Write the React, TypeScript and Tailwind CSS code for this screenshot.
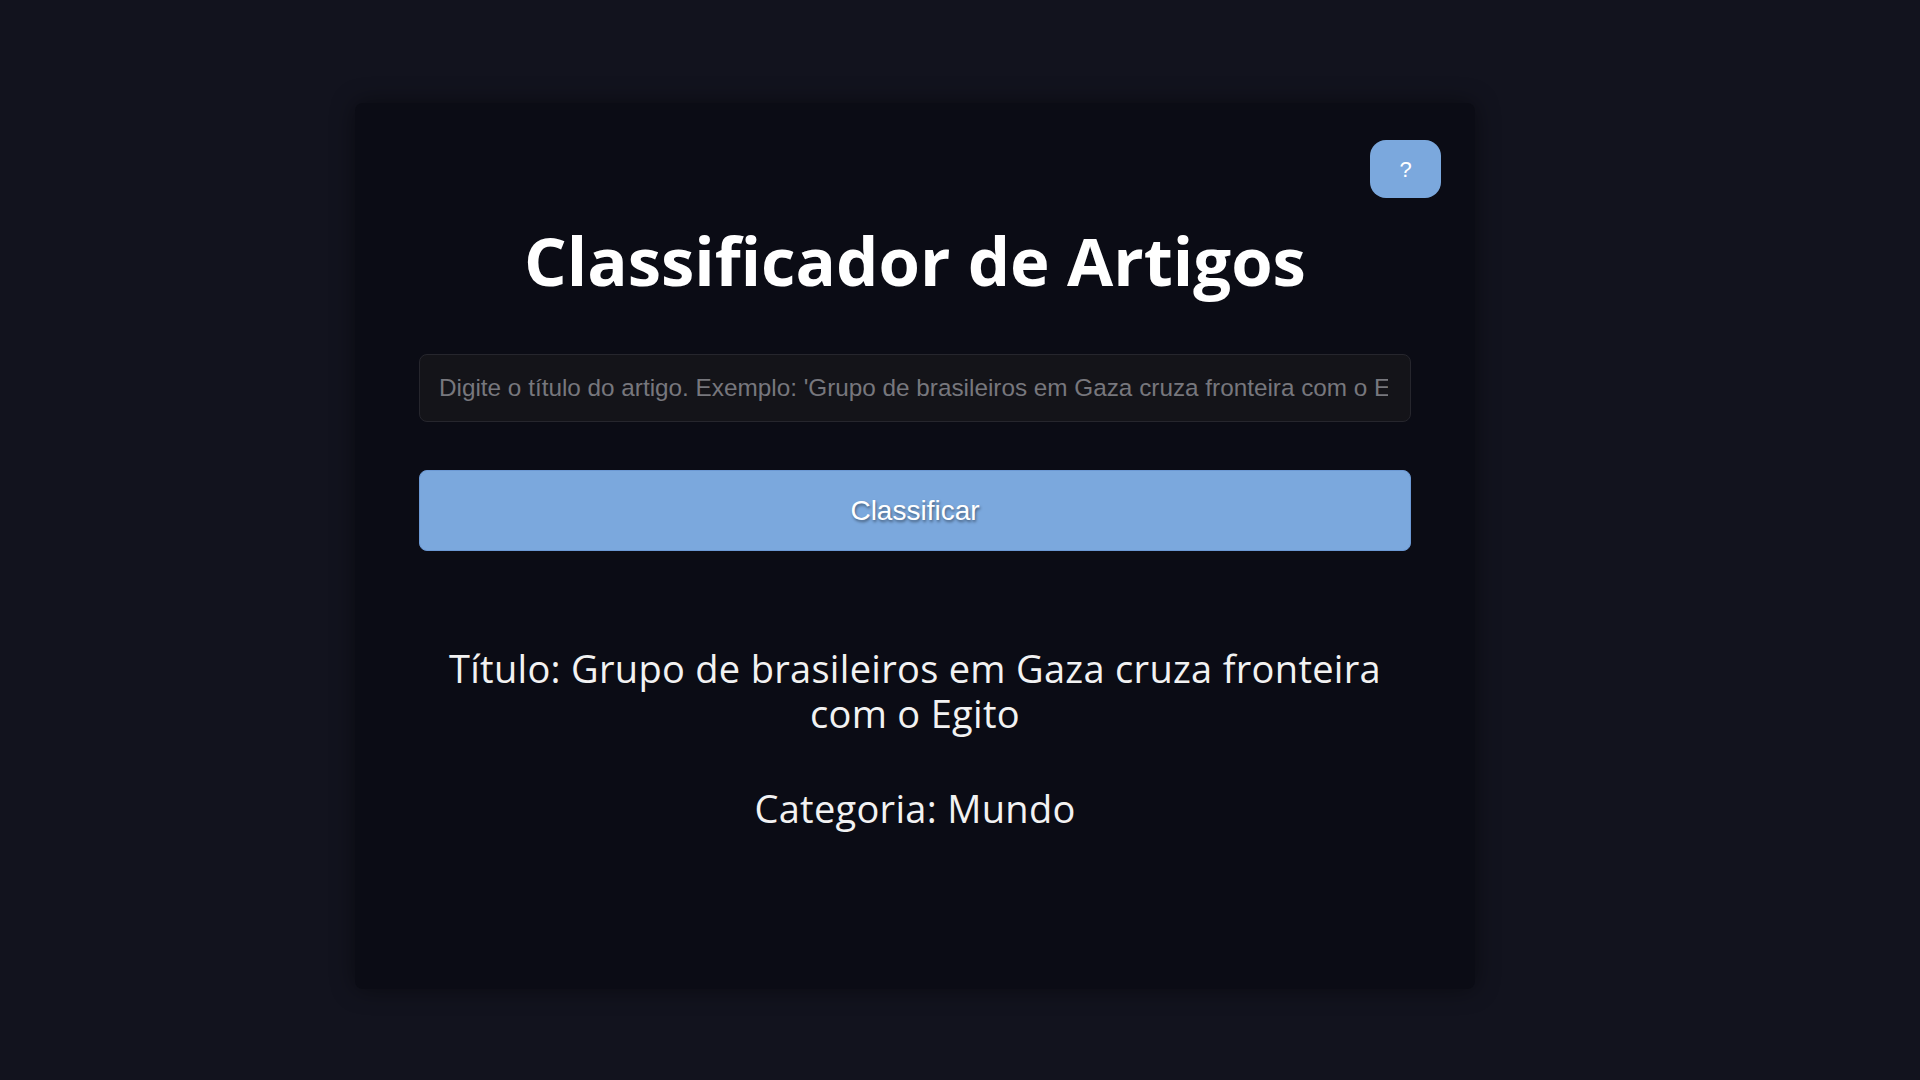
export default function App() {
    return (
        <div className="min-h-screen w-full bg-[#12131e] pt-[103px] font-['Open_Sans',sans-serif]">
            <div className="relative ml-[355px] h-[886px] w-[1120px] rounded-lg bg-[#0b0c15] px-16 pt-[116px] shadow-[0_0_24px_rgba(0,0,0,0.45)]">
                <button
                    type="button"
                    className="absolute right-[34px] top-[37px] h-[58px] w-[71px] rounded-2xl bg-[#7ba8dd] font-['Liberation_Sans',sans-serif] text-[22px] text-white"
                >
                    ?
                </button>

                <h1 className="text-center text-[67px] font-bold leading-[82px] text-white">
                    Classificador de Artigos
                </h1>

                <input
                    type="text"
                    placeholder="Digite o título do artigo. Exemplo: 'Grupo de brasileiros em Gaza cruza fronteira com o Egito'"
                    className="mt-[53px] block h-[68px] w-full rounded-lg border border-[#26262d] bg-[#141419] pl-[19px] pr-[22px] font-['Liberation_Sans',sans-serif] text-[24.3px] text-[#cfcfd4] placeholder:text-[#77777d] outline-none"
                />

                <button
                    type="button"
                    className="mt-12 block h-[81px] w-full rounded-lg border border-[#6c99d4] bg-[#7ba8dd] font-['Liberation_Sans',sans-serif] text-[28px] text-white [text-shadow:1px_2px_3px_rgba(0,0,0,0.45)]"
                >
                    Classificar
                </button>

                <div className="mt-[95px] text-center text-[38px] leading-[45px] tracking-[0.3px] text-[#f2f2f2]">
                    <p>Título: Grupo de brasileiros em Gaza cruza fronteira com o Egito</p>
                    <p className="mt-[50px]">Categoria: Mundo</p>
                </div>
            </div>
        </div>
    );
}
